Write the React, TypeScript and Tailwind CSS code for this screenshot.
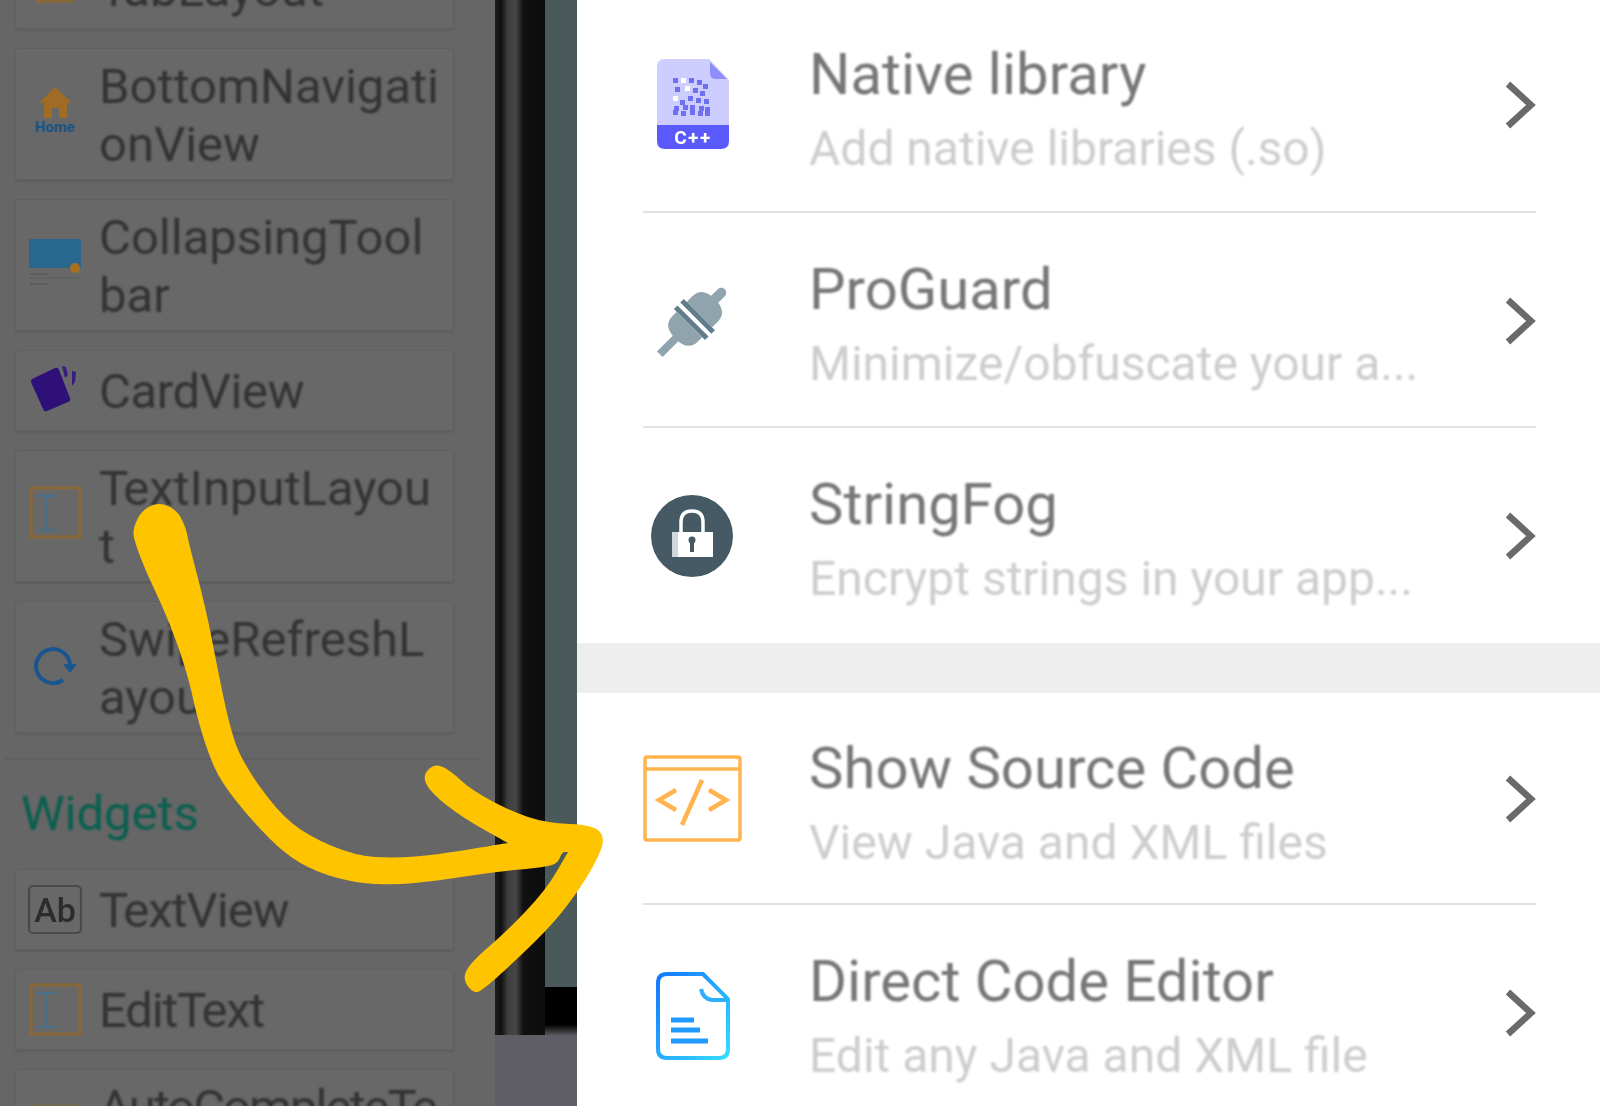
import React from "react";

const arrowPts: [number, number][] = [
  [159, 502], [177, 510], [186, 528], [188, 540], [206, 609], [217, 666], [229, 724], [241, 760], [277, 811], [308, 836],
  [356, 856], [395, 858], [435, 855], [508, 843], [508, 843], [463, 818], [431, 793], [422, 776], [435, 763], [451, 771],
  [470, 789], [510, 811], [546, 823], [594, 825], [605, 838], [598, 858], [581, 887], [554, 923], [514, 962], [484, 989],
  [474, 994], [462, 979], [471, 962], [506, 932], [546, 890], [568, 852], [568, 852], [562, 852], [558, 863], [546, 867],
  [494, 872], [435, 881], [395, 885], [356, 883], [316, 872], [285, 854], [253, 822], [221, 782], [208, 753], [196, 713],
  [190, 684], [178, 645], [162, 605], [146, 572], [134, 540], [133, 528], [142, 510],
];

function smooth(p: [number, number][]) {
  const mid = (a: [number, number], b: [number, number]) => `${(a[0] + b[0]) / 2} ${(a[1] + b[1]) / 2}`;
  let d = `M${mid(p[p.length - 1], p[0])}`;
  p.forEach((pt, i) => {
    d += ` Q${pt[0]} ${pt[1]} ${mid(pt, p[(i + 1) % p.length])}`;
  });
  return d + "Z";
}

function Chevron() {
  return (
    <svg viewBox="0 0 32 48" className="w-[32px] h-[48px] shrink-0 blur-[0.7px]">
      <path d="M4 3 L27 24 L4 45" fill="none" stroke="#6a6a6a" strokeWidth="6.5" />
    </svg>
  );
}

function Row({ icon, title, sub, line, h }: { icon: React.ReactNode; title: string; sub: string; line?: boolean; h: string }) {
  return (
    <div className={`flex items-center shrink-0 pl-[66px] pr-[64px] relative ${h}`}>
      <div className="w-[166px] shrink-0 flex items-center">{icon}</div>
      <div className="flex-1 flex flex-col pt-[13px] blur-[0.9px]">
        <div className="text-[58px] leading-[73px] text-[#767676] whitespace-nowrap">{title}</div>
        <div className="text-[48px] leading-[75px] text-[#cdcdcd] whitespace-nowrap">{sub}</div>
      </div>
      <Chevron />
      {line && <div className="absolute left-[66px] right-[64px] bottom-0 h-[2px] bg-[#e3e3e3] blur-[0.4px]" />}
    </div>
  );
}

function Card({ icon, children, tall }: { icon: React.ReactNode; children: React.ReactNode; tall?: boolean }) {
  return (
    <div className={`flex items-center shrink-0 pl-[9px] pr-[6px] bg-[#686868] border border-[#606060] rounded-[3px] shadow-[0_2px_2px_#5e5e5e] ${tall ? "h-[132px]" : "h-[81px]"}`}>
      {icon}
      <div className={`ml-[14px] whitespace-nowrap text-[49px] leading-[58px] text-[#333333] blur-[0.9px] ${tall ? "pt-[4px]" : "pt-[2px]"}`}>{children}</div>
    </div>
  );
}

function LeftIcon({ y, children }: { y: number; children: React.ReactNode }) {
  return (
    <svg viewBox={`25 ${y} 60 60`} className="w-[60px] h-[60px] shrink-0 blur-[0.7px] overflow-visible">
      {children}
    </svg>
  );
}

function Beam({ y }: { y: number }) {
  return (
    <g>
      <rect x="31" y={y} width="49" height="49" fill="none" stroke="#86683d" strokeWidth="3.5" />
      <path d={`M38 ${y + 8} H55 M46.5 ${y + 8} V${y + 42} M38 ${y + 42} H55`} fill="none" stroke="#47708c" strokeWidth="2.2" />
    </g>
  );
}

const K = ({ c }: { c: string }) => <span className="tracking-[-5px]">{c}</span>;

const qr = [
  [673, 78, 1], [681, 78, 0], [689, 78, 1], [697, 80, 1], [703, 84, 1], [675, 87, 1], [685, 86, 0], [693, 88, 1],
  [700, 91, 1], [673, 96, 0], [680, 100, 1], [688, 96, 1], [696, 98, 1], [704, 99, 1], [674, 106, 1], [683, 105, 1],
  [690, 105, 1], [699, 106, 1], [705, 107, 1], [673, 110, 1], [681, 111, 1], [690, 110, 1], [698, 111, 1], [705, 111, 1],
];

export default function App() {
  return (
    <div className="relative flex w-[1600px] h-[1106px] overflow-hidden bg-white font-['Roboto',sans-serif]">
      {/* dimmed palette */}
      <div className="w-[495px] h-full shrink-0 bg-[#666666] overflow-hidden">
        <div className="flex flex-col gap-[19px] pl-[15px] w-[454px] -mt-[52px]">
          <Card icon={<LeftIcon y={-41}><rect x="36" y="-20" width="38" height="23" fill="#86683d" /></LeftIcon>}><K c="T" />abLayout</Card>
          <Card tall icon={
            <LeftIcon y={85}>
              <path d="M55 88 L72 104 H67 V119 H59 V109 H52 V119 H44 V104 H39 Z" fill="#a06b24" />
              <text x="55" y="133" textAnchor="middle" fontSize="15" fontWeight="900" fill="#1f5583" fontFamily="Roboto, sans-serif">Home</text>
            </LeftIcon>}>BottomNavigati<br />onView</Card>
          <Card tall icon={
            <LeftIcon y={234}>
              <rect x="29" y="238" width="52" height="29" fill="#28688f" />
              <circle cx="75" cy="267" r="5" fill="#a87020" />
              <rect x="30" y="272" width="18" height="2" fill="#5c5c5c" />
              <rect x="30" y="276" width="50" height="1.5" fill="#606060" />
              <rect x="30" y="282" width="18" height="2" fill="#5c5c5c" />
            </LeftIcon>}>CollapsingTool<br />bar</Card>
          <Card icon={
            <LeftIcon y={359}>
              <path d="M32 377 L55 366 Q58 365 59 368 L70 396 Q71 399 68 400 L47 409 Q44 410 43 407 L31 380 Q31 378 32 377Z" fill="#2e1078" />
              <path d="M62 364 L66 365 L68 373 L65 376Z M72 369 L76 370 L75 380 L72 384Z" fill="#3a1a85" />
            </LeftIcon>}><span className="tracking-[-0.4px]">CardView</span></Card>
          <Card tall icon={<LeftIcon y={486}><Beam y={488} /></LeftIcon>}><K c="T" />extInputLayou<br />t</Card>
          <Card tall icon={
            <LeftIcon y={637}>
              <path d="M63 680 A17 17 0 1 1 70 664" fill="none" stroke="#1a5590" strokeWidth="4" />
              <path d="M63 664 H77 L70 673Z" fill="#1a5590" />
            </LeftIcon>}>SwipeRefreshL<br />ayout</Card>
        </div>
        <div className="h-[2px] bg-[#606060] ml-[5px] w-[475px] mt-[25px]" />
        <div className="ml-[21px] mt-[26px] mb-[27px] text-[49px] leading-[56px] text-[#0a5f50] blur-[0.9px]">Widgets</div>
        <div className="flex flex-col gap-[19px] pl-[15px] w-[454px]">
          <Card icon={
            <LeftIcon y={880}>
              <rect x="29" y="886" width="52" height="47" rx="4" fill="none" stroke="#4a4a4a" strokeWidth="2.2" />
              <text x="55" y="922" textAnchor="middle" fontSize="34" fontWeight="500" fill="#2c2c2c" fontFamily="Roboto, sans-serif">Ab</text>
            </LeftIcon>}><span className="tracking-[-1px]"><K c="T" />extView</span></Card>
          <Card icon={<LeftIcon y={980}><Beam y={985} /></LeftIcon>}><span className="tracking-[-1.2px]">Edit<K c="T" />ext</span></Card>
          <Card tall icon={<LeftIcon y={1101}><rect x="31" y="1101" width="49" height="30" fill="#86683d" /></LeftIcon>}>
            <span className="tracking-[-2px]">AutoComplete<K c="T" />e</span><br />xtView
          </Card>
        </div>
      </div>

      {/* phone edge */}
      <div className="w-[82px] h-full shrink-0 flex flex-col bg-[#5f5e66]">
        <div className="h-[1035px] flex">
          <div className="w-[50px] h-full bg-[linear-gradient(90deg,#1c1c1c_0%,#101010_12%,#3f3f3f_26%,#464646_42%,#111111_56%,#0c0c0c_100%)]" />
          <div className="w-[32px] h-full flex flex-col bg-black">
            <div className="h-[987px] bg-[#4a5a5a]" />
            <div className="flex-1 bg-[linear-gradient(180deg,#000000_0%,#000000_78%,#55555a_100%)]" />
          </div>
        </div>
      </div>

      {/* right sheet */}
      <div className="flex-1 flex flex-col bg-white -mt-[3px]">
        <Row h="h-[216px]" line title="Native library" sub="Add native libraries (.so)" icon={
          <svg viewBox="643 55 100 100" className="w-[100px] h-[100px] blur-[0.7px]">
            <path d="M665 59 H709 L729 80 V125 H657 V67 Q657 59 665 59Z" fill="#cdcdff" />
            <path d="M710 62 L727 79 H716 Q710 79 710 73Z" fill="#8d8dfb" />
            <path d="M657 125 H729 V141 Q729 149 721 149 H665 Q657 149 657 141Z" fill="#5a5afc" />
            {qr.map(([x, y, k], i) => (
              <rect key={i} x={x} y={y} width="5" height="5" fill={k ? "#6f6ff2" : "#ffffff"} />
            ))}
            <text x="693" y="144" textAnchor="middle" fontSize="19" fontWeight="700" letterSpacing="1.5" fill="#ffffff" fontFamily="Roboto, sans-serif">C++</text>
          </svg>} />
        <Row h="h-[215px]" line title="ProGuard" sub="Minimize/obfuscate your a..." icon={
          <svg viewBox="643 270 100 100" className="w-[100px] h-[100px] blur-[0.7px]">
            <g transform="rotate(45 693 320)">
              <rect x="688" y="275" width="10" height="20" rx="5" fill="#90a4ae" />
              <path d="M675 311 V303 Q675 289 693 289 Q711 289 711 303 V311Z" fill="#90a4ae" />
              <rect x="671" y="311" width="44" height="5" fill="#607d8b" />
              <rect x="671" y="320" width="44" height="5" fill="#607d8b" />
              <path d="M675 325 H711 V331 Q711 345 693 345 Q675 345 675 331Z" fill="#90a4ae" />
              <rect x="689" y="343" width="8" height="24" fill="#90a4ae" />
            </g>
          </svg>} />
        <Row h="h-[215px]" title="StringFog" sub="Encrypt strings in your app..." icon={
          <svg viewBox="643 486 100 100" className="w-[100px] h-[100px] blur-[0.7px]">
            <circle cx="692" cy="536" r="41" fill="#455a64" />
            <path d="M681 532 V522 Q681 511 692 511 Q703 511 703 522 V532" fill="none" stroke="#ffffff" strokeWidth="3.5" />
            <rect x="672" y="532" width="41" height="25" fill="#ffffff" />
            <rect x="672" y="532" width="6" height="25" fill="#cfd8dc" />
            <circle cx="692" cy="540" r="3.5" fill="#455a64" />
            <rect x="690" y="540" width="4" height="12" fill="#455a64" />
          </svg>} />
        <div className="h-[50px] shrink-0 bg-[#eeeeee]" />
        <Row h="h-[212px]" line title="Show Source Code" sub="View Java and XML files" icon={
          <svg viewBox="643 749 100 100" className="w-[100px] h-[100px] blur-[0.7px]">
            <rect x="645" y="757" width="95" height="83" rx="2" fill="none" stroke="#ffb44f" strokeWidth="3.5" />
            <path d="M645 769 H740" stroke="#ffb44f" strokeWidth="3.5" />
            <path d="M676 790 L659 800 L676 810 M709 790 L726 800 L709 810 M702 780 L682 825" fill="none" stroke="#ffb44f" strokeWidth="4.5" />
          </svg>} />
        <Row h="h-[215px]" title="Direct Code Editor" sub="Edit any Java and XML file" icon={
          <svg viewBox="643 962 100 100" className="w-[100px] h-[100px] blur-[0.7px]">
            <defs>
              <linearGradient id="doc" x1="0" y1="0" x2="1" y2="1">
                <stop offset="0" stopColor="#1577ff" />
                <stop offset="1" stopColor="#35dcff" />
              </linearGradient>
            </defs>
            <path d="M667 973 H703 L728 998 V1048 Q728 1057 719 1057 H667 Q658 1057 658 1048 V982 Q658 973 667 973Z" fill="none" stroke="url(#doc)" strokeWidth="4" />
            <path d="M701 988 Q703 998 712 999 H726" fill="none" stroke="#2fb0ff" strokeWidth="4" />
            <path d="M671 1019 H694 M671 1029 H700 M671 1040 H708" stroke="#1f9bff" strokeWidth="5" />
          </svg>} />
      </div>

      {/* hand-drawn arrow annotation */}
      <svg viewBox="0 0 1600 1106" className="absolute left-0 top-0 w-[1600px] h-[1106px] pointer-events-none">
        <path d={smooth(arrowPts)} fill="#ffc400" />
      </svg>
    </div>
  );
}
